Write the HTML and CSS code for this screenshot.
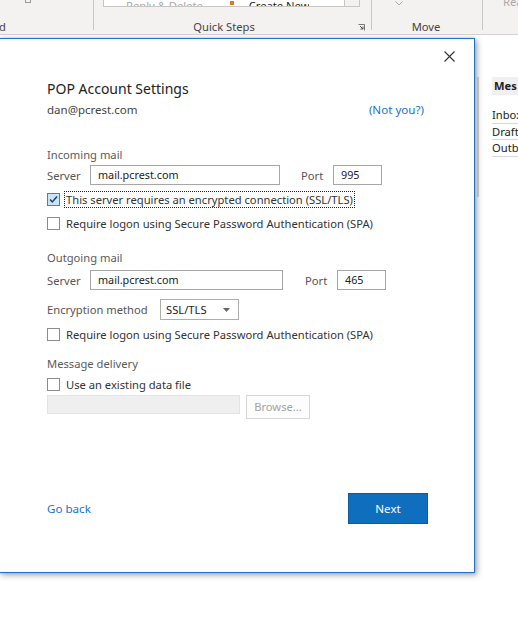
FILE: index.html
```html
<!DOCTYPE html>
<html>
<head>
<meta charset="utf-8">
<link rel="stylesheet" href="styles.css">
</head>
<body>
<div class="app">
  <div class="ribbon">
    <div class="group g1">
      <div class="g1-bit"></div>
      <div class="glabel g1-label">d</div>
    </div>
    <div class="sep"></div>
    <div class="group g2">
      <div class="gallery">
        <span class="gal-item">Reply &amp; Delete</span>
        <span class="gal-icon"></span>
        <span class="gal-item gal-new">Create New</span>
        <span class="gal-scroll"></span>
      </div>
      <div class="glabel g2-label">Quick Steps</div>
      <svg class="launcher" width="7" height="7" viewBox="0 0 7 7"><path d="M0.5 0.5h6v6" fill="none" stroke="#777" stroke-width="1"/><path d="M2 2l3 3M5 2.5v2.5h-2.5" fill="none" stroke="#555" stroke-width="1"/></svg>
    </div>
    <div class="sep"></div>
    <div class="group g3">
      <svg class="chev" width="8" height="5" viewBox="0 0 8 5"><path d="M0.5 0.5l3.5 3.5 3.5-3.5" fill="none" stroke="#aaa" stroke-width="1"/></svg>
      <div class="glabel g3-label">Move</div>
    </div>
    <div class="sep"></div>
    <div class="group g4">
      <div class="g4-text">Rea</div>
    </div>
  </div>
  <div class="main">
    <div class="reading"></div>
    <div class="folders">
      <div class="fhead">Mes</div>
      <div class="fitem">Inbox</div>
      <div class="fitem">Drafts</div>
      <div class="fitem">Outbox</div>
    </div>
  </div>

  <div class="dialog">
    <button class="close" aria-label="Close">
      <svg width="11" height="11" viewBox="0 0 11 11"><path d="M0.5 0.5l10 10M10.5 0.5l-10 10" stroke="#333" stroke-width="1.1" fill="none"/></svg>
    </button>
    <div class="title">POP Account Settings</div>
    <div class="email-row">
      <span class="email">dan@pcrest.com</span>
      <span class="link">(Not you?)</span>
    </div>

    <div class="section sec-in">Incoming mail</div>
    <div class="field-row">
      <span class="lbl lbl-server">Server</span>
      <span class="input in-server">mail.pcrest.com</span>
      <span class="lbl lbl-port">Port</span>
      <span class="input in-port">995</span>
    </div>
    <div class="cb-row cb-first">
      <span class="cb checked">
        <svg width="11" height="11" viewBox="0 0 11 11"><path d="M2 5.5l2.3 2.4 4.7-5.4" fill="none" stroke="#1f3f66" stroke-width="1.5"/></svg>
      </span>
      <span class="cb-text focus">This server requires an encrypted connection (SSL/TLS)</span>
    </div>
    <div class="cb-row">
      <span class="cb"></span>
      <span class="cb-text">Require logon using Secure Password Authentication (SPA)</span>
    </div>

    <div class="section sec-out">Outgoing mail</div>
    <div class="field-row">
      <span class="lbl lbl-server">Server</span>
      <span class="input in-server out">mail.pcrest.com</span>
      <span class="lbl lbl-port out">Port</span>
      <span class="input in-port">465</span>
    </div>
    <div class="enc-row">
      <span class="lbl lbl-enc">Encryption method</span>
      <span class="select">SSL/TLS
        <svg class="arrow" width="7" height="4" viewBox="0 0 7 4"><path d="M0 0h7l-3.5 4z" fill="#666"/></svg>
      </span>
    </div>
    <div class="cb-row cb-enc">
      <span class="cb"></span>
      <span class="cb-text">Require logon using Secure Password Authentication (SPA)</span>
    </div>

    <div class="section sec-del">Message delivery</div>
    <div class="cb-row cb-del">
      <span class="cb"></span>
      <span class="cb-text">Use an existing data file</span>
    </div>
    <div class="file-row">
      <span class="file-input"></span>
      <span class="browse">Browse...</span>
    </div>

    <div class="footer">
      <span class="link back">Go back</span>
      <span class="next">Next</span>
    </div>
  </div>
</div>
</body>
</html>
```
FILE: styles.css
```css
* { box-sizing: border-box; }
html, body { margin: 0; padding: 0; background: #fff; }
body {
  width: 518px;
  height: 622px;
  overflow: hidden;
  font-family: "Noto Sans", "Open Sans", sans-serif;
  font-size: 11.2px;
  color: #333;
}
.app { position: relative; width: 518px; height: 622px; }

/* Ribbon */
.ribbon {
  display: flex;
  height: 35px;
  background: #f3f2f1;
  border-bottom: 1px solid #d4d2d0;
}
.group { position: relative; height: 100%; }
.glabel {
  position: absolute;
  bottom: 0;
  height: 15px;
  line-height: 15px;
  font-size: 11.2px;
  color: #444;
}
.sep { width: 1px; height: 30px; background: #c8c6c4; flex: none; }
.g1 { width: 93px; flex: none; }
.g1-bit { position: absolute; left: 25px; top: -3px; width: 6px; height: 6px; border: 1px solid #999; }
.g1-label { left: -1px; }
.g2 { width: 277px; flex: none; }
.gallery {
  position: absolute;
  left: 9px;
  top: -8px;
  width: 257px;
  height: 15px;
  border: 1px solid #c8c6c4;
  background: #fff;
  display: flex;
  align-items: flex-end;
  overflow: hidden;
}
.gal-item { font-size: 11.2px; color: #aaa; line-height: 12px; margin-left: 22px; height: 6px; overflow: hidden; white-space: nowrap; }
.gal-icon { width: 4px; height: 4px; background: #e07a1f; margin-left: 27px; margin-bottom: 1px; flex: none; }
.gal-new { color: #222; margin-left: 15px; }
.gal-scroll { margin-left: auto; width: 15px; height: 100%; border-left: 1px solid #c8c6c4; background: #f3f2f1; flex: none; }
.g2-label { left: 0; right: 0; text-align: center; padding-right: 17px; }
.launcher { position: absolute; right: 6px; top: 24px; }
.g3 { width: 110px; flex: none; }
.chev { position: absolute; left: 23px; top: 1px; }
.g3-label { left: 0; right: 0; text-align: center; padding-right: 2px; }
.g4 { flex: 1; }
.g4-text { position: absolute; left: 20px; top: -6px; font-size: 11.2px; color: #a8a8a8; }

/* Main behind the dialog */
.main { display: flex; align-items: flex-start; height: calc(100% - 35px); }
.reading { width: 477px; flex: none; }
.folders {
  flex: 1;
  min-width: 0;
  margin-top: 42px;
  height: 120px;
  border-left: 2px solid #dcdad8;
  padding-left: 13px;
}
.fhead {
  height: 18px;
  line-height: 18px;
  background: #f0f0f0;
  font-weight: bold;
  color: #222;
  padding-left: 2px;
  margin-bottom: 12px;
  white-space: nowrap;
  overflow: hidden;
}
.fitem {
  height: 16.5px;
  line-height: 15px;
  border-bottom: 1px solid #d8d8d8;
  color: #222;
  white-space: nowrap;
  overflow: hidden;
}

/* Dialog */
.dialog {
  position: absolute;
  left: -1px;
  top: 38px;
  width: 476px;
  height: 535px;
  background: #fff;
  border: 1px solid #1f72c4;
  box-shadow: 2px 2px 6px rgba(0,0,0,0.35), 0 0 3px rgba(0,0,0,0.15);
  padding: 40px 50px 48px 47px;
  display: flex;
  flex-direction: column;
}
.close {
  position: absolute;
  top: 10px;
  right: 17px;
  width: 15px;
  height: 15px;
  padding: 2px;
  border: 0;
  background: transparent;
  display: flex;
}
.title {
  font-size: 14px;
  line-height: 20px;
  color: #222;
}
.email-row {
  display: flex;
  justify-content: space-between;
  margin-top: 2px;
  height: 18px;
  line-height: 18px;
}
.email { font-size: 11.5px; color: #444; }
.link { color: #1b71c9; font-size: 11.6px; }

.section { height: 18px; line-height: 18px; color: #5a5a5a; }
.sec-in { margin-top: 27px; }
.sec-out { margin-top: 16px; }
.sec-del { margin-top: 11px; }

.field-row { display: flex; align-items: center; height: 20px; margin-top: 1px; }
.sec-out + .field-row { margin-top: 3px; }
.lbl { color: #555; white-space: nowrap; }
.lbl-server { width: 43px; }
.lbl-port { margin-left: 21px; width: 32px; }
.lbl-port.out { margin-left: 22px; }
.input {
  height: 20px;
  line-height: 18px;
  border: 1px solid #a6a6a6;
  padding-left: 7px;
  color: #222;
  font-size: 10.8px;
}
.in-server { width: 190px; }
.in-server.out { width: 193px; }
.in-port { width: 49px; }

.cb-row { display: flex; align-items: center; height: 20px; margin-top: 4px; }
.cb-first { margin-top: 4px; }
.cb-enc { margin-top: 4px; }
.cb-del { margin-top: 1px; }
.cb {
  width: 13px;
  height: 13px;
  border: 1px solid #8c8c8c;
  background: #fff;
  flex: none;
  display: flex;
  align-items: center;
  justify-content: center;
}
.cb.checked { background: #cce4f7; border-color: #3f84c0; }
.cb-text { margin-left: 4px; color: #333; line-height: 15px; padding: 0 1px; border: 1px solid transparent; white-space: nowrap; }
.cb-text.focus { border: 1px dotted #222; }

.enc-row { display: flex; align-items: center; height: 21px; margin-top: 9px; }
.lbl-enc { width: 113px; }
.select {
  position: relative;
  width: 79px;
  height: 21px;
  line-height: 19px;
  border: 1px solid #adadad;
  padding-left: 5px;
  color: #222;
}
.arrow { position: absolute; right: 8px; top: 8px; }

.file-row { display: flex; height: 24px; margin-top: 1px; }
.file-input { width: 193px; height: 19px; background: #efefef; border: 1px solid #e3e3e3; }
.browse {
  margin-left: 6px;
  width: 64px;
  height: 24px;
  border: 1px solid #d6d6d6;
  background: #fdfdfd;
  color: #a3a3a3;
  text-align: center;
  line-height: 22px;
}

.footer {
  margin-top: auto;
  display: flex;
  align-items: center;
  justify-content: space-between;
  margin-right: -4px;
}
.back { font-size: 11.6px; }
.next {
  width: 80px;
  height: 31px;
  line-height: 29px;
  text-align: center;
  background: #106ebe;
  border: 1px solid #0c5aa0;
  color: #fff;
  font-size: 11.6px;
}
```
